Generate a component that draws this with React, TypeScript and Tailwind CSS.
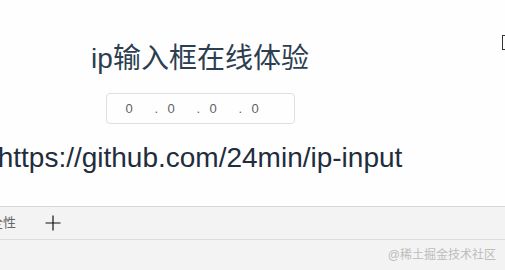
import React from 'react';

export default function App() {
  const parts = ['0', '0', '0', '0'];
  return (
    <div className="w-[505px] h-[270px] overflow-hidden bg-[#fefefe] flex flex-col" style={{ fontFamily: '"Liberation Sans", "Noto Sans CJK SC", sans-serif' }}>
      <div className="relative h-[206px] shrink-0">
        <div className="w-[400px] flex flex-col items-center pt-[42px]">
          <h1 className="text-[28px] leading-[34px] text-[#2c3e50] whitespace-nowrap">ip输入框在线体验</h1>
          <div className="mt-[17px] w-[189px] h-[31px] border border-[#dcdfe6] rounded-[4px] flex items-center pl-[19px] text-[13px] text-[#606266]">
            {parts.map((p, i) => (
              <div key={i} className="w-[42px] flex items-center">
                {i > 0 && <span className="w-[13px] -ml-[13px]">.</span>}
                <span>{p}</span>
              </div>
            ))}
          </div>
          <div className="mt-[16px] text-[28px] leading-[36px] text-[#1f2d3d] whitespace-nowrap">https://github.com/24min/ip-input</div>
        </div>
        <div className="absolute right-0 top-[35px] w-[3px] h-[15px] border-l border-t border-b border-[#333]" />
      </div>
      <div className="flex-1 bg-[#f4f3f4] border-t border-[#d6d6d6] flex flex-col">
        <div className="h-[33px] border-b border-[#dcdcdc] flex items-center">
          <span className="-ml-[23px] text-[13px] text-[#666] whitespace-nowrap">安全性</span>
          <svg width="16" height="16" viewBox="0 0 16 16" className="ml-[29px]">
            <path d="M8 0.5V15.5M0.5 8H15.5" stroke="#111" strokeWidth="1.2" fill="none" />
          </svg>
        </div>
        <div className="flex-1 flex justify-end items-center pr-[9px]">
          <span className="text-[12px] text-[#bcbcbc]">@稀土掘金技术社区</span>
        </div>
      </div>
    </div>
  );
}
